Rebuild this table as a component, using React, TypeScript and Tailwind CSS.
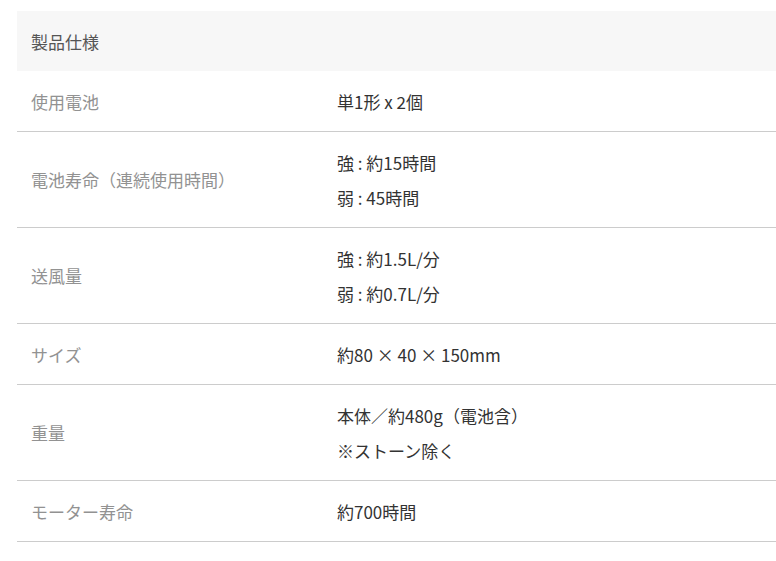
export default function App() {
  const rows: { label: string; values: string[] }[] = [
    { label: "使用電池", values: ["単1形 x 2個"] },
    { label: "電池寿命（連続使用時間）", values: ["強 : 約15時間", "弱 : 45時間"] },
    { label: "送風量", values: ["強 : 約1.5L/分", "弱 : 約0.7L/分"] },
    { label: "サイズ", values: ["約80 × 40 × 150mm"] },
    { label: "重量", values: ["本体／約480g（電池含）", "※ストーン除く"] },
    { label: "モーター寿命", values: ["約700時間"] },
  ];

  return (
    <div className="w-[776px] h-[561px] overflow-hidden bg-white pl-[17px] pt-[11px] font-['Noto_Sans_CJK_JP','Noto_Sans',sans-serif] text-[17px]">
      <div className="w-[800px]">
        {/* Header */}
        <div className="bg-[#f7f7f7] px-[14px] py-[12.5px] leading-[35px] text-[#555]">製品仕様</div>

        {rows.map((row) => (
          <div key={row.label} className="flex items-center border-b border-[#cccccc]">
            <div className="w-[306px] px-[14px] py-[12.5px] leading-[35px] text-[#929292]">{row.label}</div>
            <div className="flex-1 px-[14px] py-[12.5px] leading-[35px] text-[#333]">
              {row.values.map((v) => (
                <div key={v}>{v}</div>
              ))}
            </div>
          </div>
        ))}
      </div>
    </div>
  );
}
